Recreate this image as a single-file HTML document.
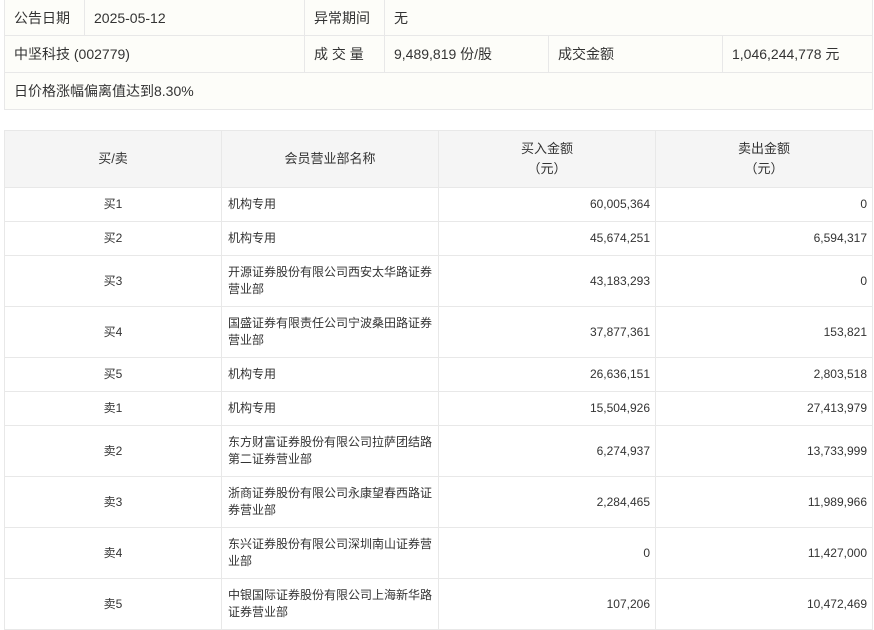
<!DOCTYPE html>
<html><head><meta charset="utf-8"><style>
body{margin:0;background:#fff;font-family:"Liberation Sans","Noto Sans CJK SC",sans-serif;color:#333;}
table{border-collapse:collapse;position:absolute;left:4px;width:869px;table-layout:fixed}
td,th{border:1px solid #e8e8e8;padding:0;}
#t1{top:-1px;background:#fdfdf9;font-size:14px}
#t1 td{padding-left:9px}
#t2{top:130px;font-size:12px}
#t2 th{background:#f5f5f5;font-weight:normal;height:56px;line-height:20px;font-size:13px}
#t2 td{background:#fff;line-height:17px}
.c{text-align:center}.r{text-align:right;padding-right:5px}.l{padding-left:6px}
</style></head><body>
<table id="t1">
<col style="width:80px"><col style="width:220px"><col style="width:80px"><col style="width:164px"><col style="width:174px"><col>
<tr style="height:36px"><td>公告日期</td><td>2025-05-12</td><td>异常期间</td><td colspan="3">无</td></tr>
<tr style="height:37px"><td colspan="2">中坚科技 (002779)</td><td>成 交 量</td><td>9,489,819 份/股</td><td>成交金额</td><td>1,046,244,778 元</td></tr>
<tr style="height:37px"><td colspan="6">日价格涨幅偏离值达到8.30%</td></tr>
</table>
<table id="t2">
<col style="width:217px"><col style="width:217px"><col style="width:217px"><col>
<tr><th>买/卖</th><th>会员营业部名称</th><th>买入金额<br>（元）</th><th>卖出金额<br>（元）</th></tr>
<tr style="height:34px"><td class="c">买1</td><td class="l">机构专用</td><td class="r">60,005,364</td><td class="r">0</td></tr>
<tr style="height:34px"><td class="c">买2</td><td class="l">机构专用</td><td class="r">45,674,251</td><td class="r">6,594,317</td></tr>
<tr style="height:51px"><td class="c">买3</td><td class="l">开源证券股份有限公司西安太华路证券营业部</td><td class="r">43,183,293</td><td class="r">0</td></tr>
<tr style="height:51px"><td class="c">买4</td><td class="l">国盛证券有限责任公司宁波桑田路证券营业部</td><td class="r">37,877,361</td><td class="r">153,821</td></tr>
<tr style="height:34px"><td class="c">买5</td><td class="l">机构专用</td><td class="r">26,636,151</td><td class="r">2,803,518</td></tr>
<tr style="height:34px"><td class="c">卖1</td><td class="l">机构专用</td><td class="r">15,504,926</td><td class="r">27,413,979</td></tr>
<tr style="height:51px"><td class="c">卖2</td><td class="l">东方财富证券股份有限公司拉萨团结路第二证券营业部</td><td class="r">6,274,937</td><td class="r">13,733,999</td></tr>
<tr style="height:51px"><td class="c">卖3</td><td class="l">浙商证券股份有限公司永康望春西路证券营业部</td><td class="r">2,284,465</td><td class="r">11,989,966</td></tr>
<tr style="height:51px"><td class="c">卖4</td><td class="l">东兴证券股份有限公司深圳南山证券营业部</td><td class="r">0</td><td class="r">11,427,000</td></tr>
<tr style="height:51px"><td class="c">卖5</td><td class="l">中银国际证券股份有限公司上海新华路证券营业部</td><td class="r">107,206</td><td class="r">10,472,469</td></tr>
</table>
</body></html>
